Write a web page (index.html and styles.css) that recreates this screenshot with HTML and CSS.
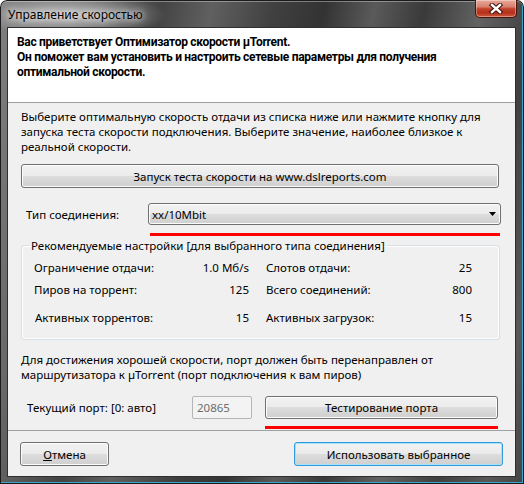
FILE: index.html
```html
<!DOCTYPE html>
<html lang="ru">

<head>
  <meta charset="UTF-8" />
  <title>Управление скоростью</title>
  <link rel="stylesheet" href="styles.css">
</head>

<body>
  <div class="window">
    <div class="titlebar">
      <span class="title">Управление скоростью</span>
      <span class="close">
        <svg width="16" height="11" viewBox="0 0 16 11">
          <path d="M4 2 L12 9 M12 2 L4 9" stroke="#3d120a" stroke-width="4.4" stroke-linecap="square" />
          <path d="M4 2 L12 9 M12 2 L4 9" stroke="#fff" stroke-width="2.4" stroke-linecap="square" />
        </svg>
      </span>
    </div>

    <div class="client">
      <div class="header">
        <p>Вас приветствует Оптимизатор скорости µTorrent.<br>
          Он поможет вам установить и настроить сетевые параметры для получения<br>
          оптимальной скорости.</p>
      </div>

      <div class="content">
        <p class="intro">Выберите оптимальную скорость отдачи из списка ниже или нажмите кнопку для<br>
          запуска теста скорости подключения. Выберите значение, наиболее близкое к<br>
          реальной скорости.</p>

        <button class="btn btn-wide">Запуск теста скорости на www.dslreports.com</button>

        <div class="field-row">
          <label class="conn-label">Тип соединения:</label>
          <div class="combo">
            <span>xx/10Mbit</span>
            <svg width="7" height="4" viewBox="0 0 7 4"><path d="M0 0h7L3.5 4z" fill="#000" /></svg>
          </div>
        </div>
        <div class="mark mark-combo"></div>

        <fieldset class="group">
          <legend>Рекомендуемые настройки [для выбранного типа соединения]</legend>
          <div class="settings">
            <span>Ограничение отдачи:</span><span class="val">1.0 Мб/s</span>
            <span class="lbl2">Слотов отдачи:</span><span class="val">25</span>
            <span>Пиров на торрент:</span><span class="val">125</span>
            <span class="lbl2">Всего соединений:</span><span class="val">800</span>
            <span class="shift">Активных торрентов:</span><span class="val">15</span>
            <span class="lbl2">Активных загрузок:</span><span class="val">15</span>
          </div>
        </fieldset>

        <p class="note">Для достижения хорошей скорости, порт должен быть перенаправлен от<br>
          маршрутизатора к µTorrent (порт подключения к вам пиров)</p>

        <div class="port-row">
          <span class="port-label">Текущий порт: [0: авто]</span>
          <span class="port-input">20865</span>
          <button class="btn btn-port">Тестирование порта</button>
        </div>
        <div class="mark mark-port"></div>
      </div>

      <div class="footer">
        <button class="btn btn-cancel"><u>О</u>тмена</button>
        <button class="btn btn-default">Использовать выбранное</button>
      </div>
    </div>
  </div>
</body>

</html>
```

FILE: styles.css
```css
body {
  margin: 0;
  background-color: #fff;
  font-family: "Noto Sans", sans-serif;
  font-size: 11.5px;
  color: #000;
}

p {
  margin: 0;
  line-height: 15px;
  white-space: nowrap;
}

.window {
  width: 524px;
  height: 484px;
  box-sizing: border-box;
  padding: 0 8px 7px 7px;
  display: flex;
  flex-direction: column;
  border-radius: 7px 7px 0 0;
  background:
    radial-gradient(ellipse 95px 22px at 72px 15px, rgba(255, 255, 255, 0.55), rgba(255, 255, 255, 0)),
    linear-gradient(102deg, #808080 0%, #676767 14%, #444 26%, #606060 34%, #404040 44%, #333 52%, #5a5a5a 60%, #3a3a3a 68%, #626262 77%, #404040 86%, #585858 94%, #444 100%);
  box-shadow:
    inset 0 0 0 1px #1b1b1b,
    inset 0 2px 0 rgba(255, 255, 255, 0.35),
    inset -2px -2px 0 #3aa6c8;
}

.titlebar {
  height: 27px;
  display: flex;
  justify-content: space-between;
  align-items: flex-start;
  margin-right: -1px;
}

.title {
  padding: 7px 0 0 1px;
  font-size: 12px;
  line-height: 15px;
  text-shadow: 0 0 6px #fff, 0 0 10px rgba(255, 255, 255, 0.8);
}

.close {
  width: 42px;
  height: 18px;
  box-sizing: border-box;
  display: flex;
  align-items: center;
  justify-content: center;
  border: 1px solid #4b130a;
  border-top: none;
  border-radius: 0 0 5px 5px;
  background: linear-gradient(#e9a99b, #d8806c 40%, #c1412b 52%, #b5311c 75%, #d0593c);
  box-shadow: inset 0 0 0 1px rgba(255, 255, 255, 0.35);
}

.client {
  flex: 1;
  background-color: #f0f0f0;
  border: 1px solid #2f2f2f;
  display: flex;
  flex-direction: column;
}

.header {
  background-color: #fff;
  height: 67px;
  padding: 7px 0 0 9px;
  border-bottom: 1px solid #a0a0a0;
  font-family: Roboto, "Noto Sans", sans-serif;
  font-size: 12px;
  font-weight: bold;
  letter-spacing: -0.3px;
}

.intro {
  margin: 6px 0 0 13px;
}

.btn {
  display: block;
  height: 24px;
  padding: 0;
  font: inherit;
  color: #000;
  border: 1px solid #707070;
  border-radius: 3px;
  background: linear-gradient(#f2f2f2 0%, #ebebeb 49%, #dddddd 50%, #cfcfcf 100%);
  box-shadow: inset 0 0 0 1px #fcfcfc;
}

.btn-wide {
  width: 478px;
  margin: 10px 0 0 13px;
}

.field-row {
  display: flex;
  align-items: center;
  height: 22px;
  margin-top: 15px;
  padding-left: 18px;
}

.conn-label {
  width: 122px;
  flex: none;
}

.combo {
  width: 353px;
  height: 22px;
  box-sizing: border-box;
  display: flex;
  align-items: center;
  justify-content: space-between;
  padding: 0 4px 0 3px;
  border: 1px solid #707070;
  border-radius: 3px;
  background: linear-gradient(#f2f2f2 0%, #ebebeb 49%, #dddddd 50%, #cfcfcf 100%);
  box-shadow: inset 0 0 0 1px #fcfcfc;
}

.mark {
  height: 3px;
  background-color: #f00;
}

.mark-combo {
  width: 350px;
  margin: 8px 0 0 142px;
}

.mark-port {
  width: 233px;
  margin: 7px 0 0 257px;
}

.group {
  width: 479px;
  box-sizing: border-box;
  margin: 2px 0 0 13px;
  padding: 7px 0 14px 12px;
  min-inline-size: 0;
  border: 1px solid #d5dfe5;
  border-radius: 3px;
  box-shadow: inset 0 0 0 1px #fff;
}

.group legend {
  margin-left: -5px;
  padding: 0 2px;
  line-height: 15px;
}

.settings {
  display: grid;
  grid-template-columns: 155px 60px 162px 61px;
  grid-template-rows: 22px 28px 15px;
  line-height: 15px;
}

.settings .val {
  text-align: right;
}

.settings .lbl2 {
  padding-left: 17px;
}

.settings .shift {
  padding-left: 1px;
}

.note {
  margin: 12px 0 0 13px;
}

.port-row {
  display: flex;
  align-items: center;
  height: 23px;
  margin-top: 14px;
  padding-left: 19px;
}

.port-label {
  width: 165px;
  flex: none;
}

.port-input {
  width: 60px;
  height: 23px;
  box-sizing: border-box;
  display: flex;
  align-items: center;
  padding-left: 4px;
  color: #6d6d6d;
  background-color: #f3f3f3;
  border: 1px solid #b5b5b5;
  border-radius: 2px;
}

.btn-port {
  width: 233px;
  height: 23px;
  margin-left: 13px;
}

.footer {
  display: flex;
  justify-content: space-between;
  margin-top: 1px;
  padding: 11px 12px 0;
  border-top: 1px solid #a0a0a0;
}

.btn-cancel {
  width: 89px;
}

.btn-default {
  width: 209px;
  border-color: #3399dd;
  box-shadow: inset 0 0 0 1px #a6e2fb;
}
```
